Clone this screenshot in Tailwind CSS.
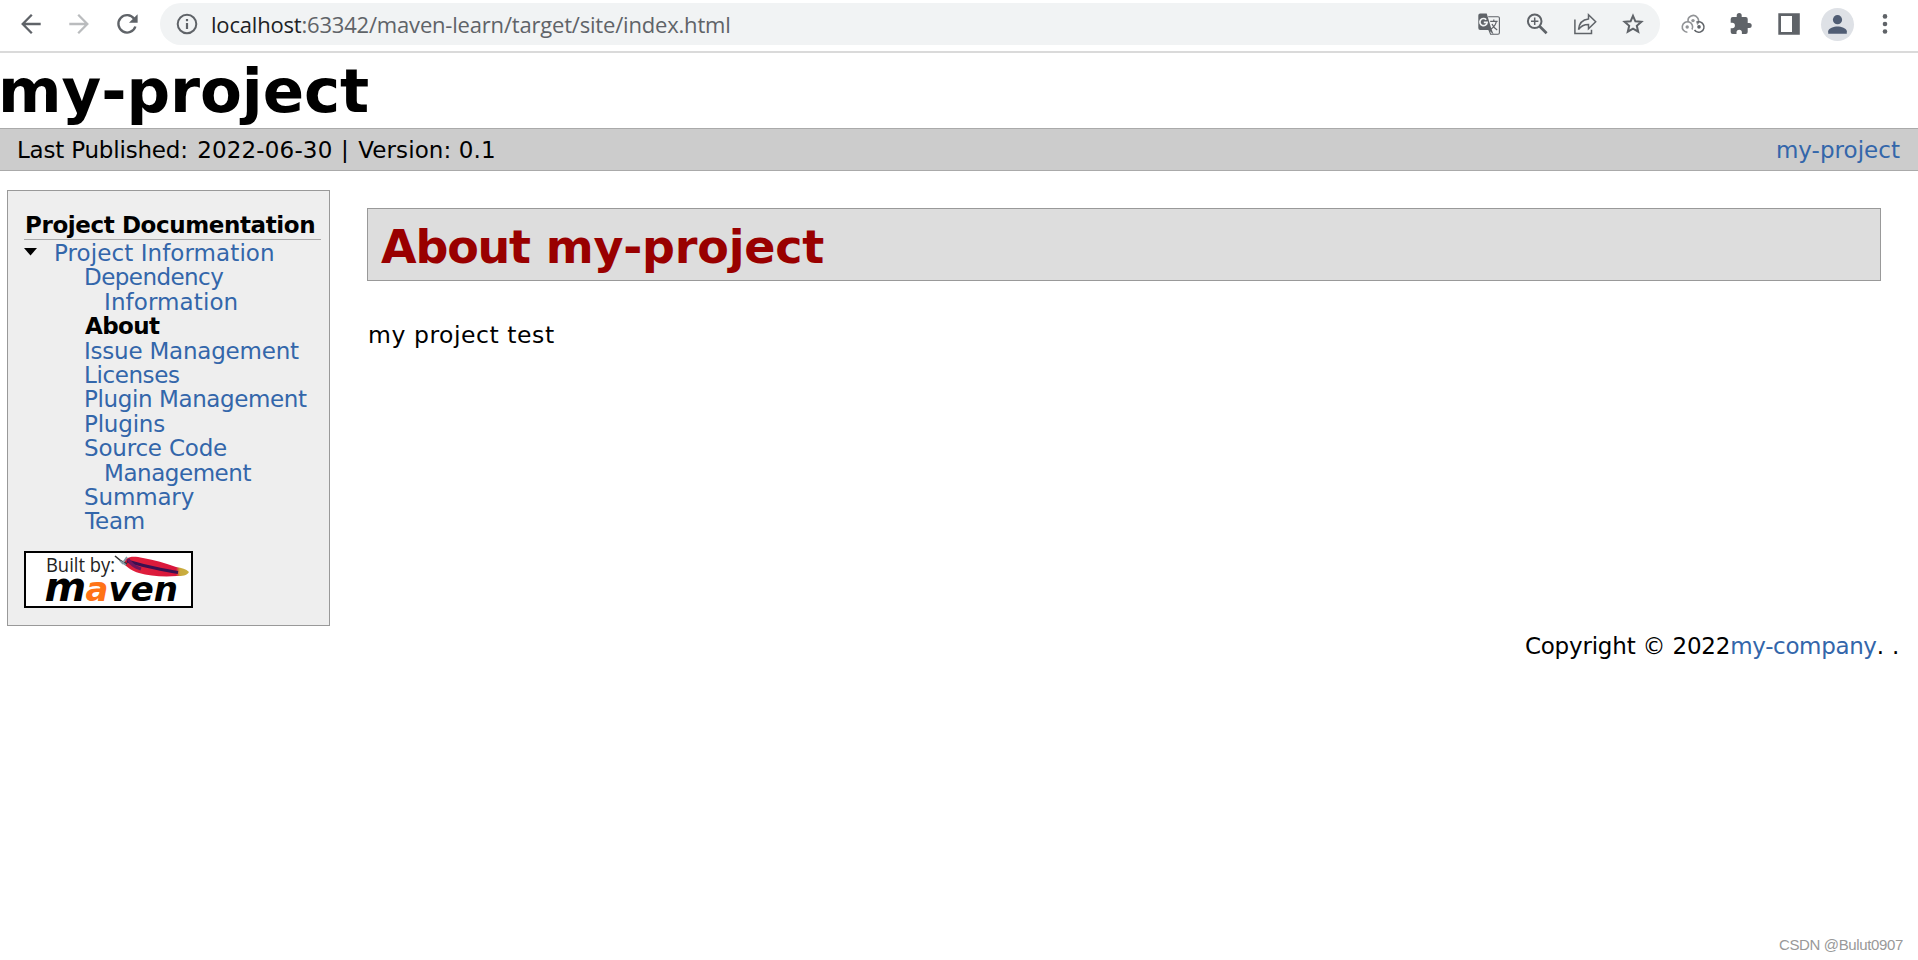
<!DOCTYPE html>
<html lang="en">
<head>
<meta charset="utf-8">
<title>my-project – About</title>
<script src="https://cdn.jsdelivr.net/npm/@tailwindcss/browser@4"></script>
</head>
<body class="relative h-[960px] overflow-hidden bg-white text-[23px] text-black font-['DejaVu_Sans',Verdana,sans-serif]">

<!-- Browser toolbar -->
<div class="flex h-[53px] items-start border-b-2 border-[#dadada] pl-[7px] text-[#5f6368]">
  <div class="flex h-12 w-[153px]">
    <svg class="h-12 w-12" viewBox="-24 -24 48 48" fill="none" stroke="currentColor" stroke-width="2.3"><path d="M9.7 0H-8M.8-9.2-8.3 0 .8 9.2"/></svg>
    <svg class="h-12 w-12 text-[#babcbe]" viewBox="-24 -24 48 48" fill="none" stroke="currentColor" stroke-width="2.3"><path d="M-9.7 0H8M-.8-9.2 8.3 0-.8 9.2"/></svg>
    <svg class="h-12 w-12" viewBox="-24 -24 48 48" fill="none" stroke="currentColor" stroke-width="2.4"><path d="M7.2-5.2A8.7 8.7 0 1 0 8.4 2.5"/><path d="M10.6-9.8v8.6H2z" fill="currentColor" stroke="none"/></svg>
  </div>
  <div class="mt-[3px] flex h-[42px] w-[1500px] items-center rounded-full bg-[#f1f3f4] pr-[3px]">
    <svg class="ml-[15px] h-6 w-6" viewBox="-12 -12 24 24" fill="none" stroke="currentColor" stroke-width="2"><circle r="9.3"/><path d="M0-1v6" stroke-width="2.2"/><path d="M0-5v2.2" stroke-width="2.2"/></svg>
    <div class="ml-3 flex-1 pb-px whitespace-nowrap font-['Open_Sans',sans-serif] text-[22px] leading-[40px] tracking-[-0.19px]"><span class="text-[#202124]">localhost</span>:63342/maven-learn/target/site/index.html</div>
    <!-- translate -->
    <svg class="h-12 w-12" viewBox="-24 -24 48 48"><path d="M-8.8-10.5h6.5l4.5 14.8 2.4 6.3-5-4.6h-8.4a1.9 1.9 0 0 1-1.9-1.9V-8.6a1.9 1.9 0 0 1 1.9-1.9z" fill="#5f6368"/><path d="M-.8-7.3H9a1.4 1.4 0 0 1 1.4 1.4V8.8A1.4 1.4 0 0 1 9 10.2H1.6L-.2 5.6" fill="none" stroke="#5f6368" stroke-width="1.1"/><path d="M1.2-2.6h7.4M4.8-4.4v1.8M7.4-2.6C6.6.8 4.4 3.6 1.8 5.2M3 0c1 2.4 2.8 4.4 5.2 6" fill="none" stroke="#5f6368" stroke-width="1.2"/><path d="M-2.8-4.3a3.6 3.6 0 1 0 .9 2.7h-3.3" fill="none" stroke="#f1f3f4" stroke-width="1.7"/></svg>
    <!-- zoom -->
    <svg class="h-12 w-12" viewBox="-24 -24 48 48" fill="none" stroke="#5f6368"><circle cx="-2.3" cy="-2.7" r="6.8" stroke-width="2"/><path d="m2.6 2.3 7 7" stroke-width="2.8"/><path d="M-6-2.7h7.4M-2.3-6.4V1" stroke-width="1.5"/></svg>
    <!-- share -->
    <svg class="h-12 w-12" viewBox="-24.5 -24 48 48" fill="none" stroke="#5f6368" stroke-width="1.5"><path d="M-10.6-4.6V9.4H6V5.8"/><path d="M3-9.3v4.2C-3.5-4.5-6.5 0-7 5.6-4.5 1.8-1.5.5 3 .5v4.3l7.2-7.1z"/></svg>
    <!-- bookmark -->
    <svg class="h-12 w-12" viewBox="-24 -24 48 48" fill="none" stroke="#5f6368" stroke-width="2"><path d="m0-8.2 2.4 5.5 6 .5-4.6 4 1.4 5.9L0 4.6l-5.2 3.1 1.4-5.9-4.6-4 6-.5z"/></svg>
  </div>
  <div class="ml-[9px] flex h-12">
    <!-- extension -->
    <svg class="h-12 w-12" viewBox="-24 -24 48 48" fill="none" stroke-width="1.6"><g stroke="#919396"><path d="M-5.6 8.2A5.2 5.2 0 1 1-1 5.5"/><path d="M-4.7-1.8A5.2 5.2 0 1 1 4 .4"/></g><path d="M1.5 6A5.2 5.2 0 1 0 3.4-1.7" stroke="#5f6368"/><circle cx="-5.8" cy="3" r="1.7" fill="#919396"/><circle cx="0" cy="-3.4" r="1.7" fill="#919396"/><circle cx="6" cy="2.9" r="1.8" fill="#5f6368"/></svg>
    <!-- puzzle -->
    <svg class="h-12 w-12" viewBox="-24 -24 48 48" fill="#5f6368"><path d="M8.2-1H6.7v-4a2 2 0 0 0-2-2H.7v-1.5a2.5 2.5 0 0 0-5 0V-7h-4a2 2 0 0 0-2 2v3.8h1.5a2.7 2.7 0 0 1 0 5.4h-1.5V8a2 2 0 0 0 2 2h3.8V8.5a2.7 2.7 0 0 1 5.4 0V10h3.8a2 2 0 0 0 2-2V4h1.5a2.5 2.5 0 0 0 0-5z"/></svg>
    <!-- side panel -->
    <svg class="h-12 w-12" viewBox="-24 -24 48 48"><path fill="#5f6368" fill-rule="evenodd" d="M-10.7-10.7h21.5v21.5h-21.5zm2.7 2.7v16H3v-16z"/></svg>
    <!-- profile -->
    <svg class="h-12 w-12" viewBox="-24.5 -24 48 48"><circle cy=".5" r="16.5" fill="#dee1e6"/><g fill="#505d74"><circle cy="-4.3" r="4.6"/><path d="M-9.3 9.7V7.2C-9.3 4-3.5 2.4 0 2.4S9.3 4 9.3 7.2v2.5z"/></g></svg>
    <!-- menu -->
    <svg class="h-12 w-12" viewBox="-24 -24 48 48" fill="#5f6368"><circle cy="-7.6" r="2.3"/><circle r="2.3"/><circle cy="7.5" r="2.3"/></svg>
  </div>
</div>

<!-- Banner -->
<h1 class="-ml-[2px] h-[75px] whitespace-nowrap text-[61px] leading-[76px] font-bold tracking-[-0.082px]">my-project</h1>

<!-- Breadcrumbs -->
<div class="flex h-[43px] justify-between border-y border-[#aaa] bg-[#ccc] pr-[18px] pl-[17px] leading-[42px] whitespace-nowrap">
  <span><span class="tracking-[-0.2px]">Last Published:</span><span class="ml-[2px] tracking-[0.159px]"> 2022-06-30 <span class="ml-px">|</span></span><span class="ml-[2px] tracking-[0.1px]"> Version: 0.1</span></span>
  <a class="tracking-[0.031px] text-[#36a]">my-project</a>
</div>

<main class="mt-[19px] flex items-start whitespace-nowrap">
  <nav class="ml-[7px] h-[436px] w-[323px] border border-[#999] bg-[#eee] pt-[22px] pr-2 pl-4">
    <h5 class="h-[27px] border-b border-[#aaa] pl-px text-[23px] leading-6 font-bold tracking-[-0.4px]">Project Documentation</h5>
    <div class="flex pt-px leading-[24.4px] text-[#36a]">
      <svg class="mt-[7px] h-2 w-[13px]" viewBox="0 0 13 8"><path d="M0 0h13L6.5 7.5z" fill="#000"/></svg>
      <a class="ml-[17px] tracking-[0.08px]">Project Information</a>
    </div>
    <ul class="pl-[60px] leading-[24.4px] text-[#36a]">
      <li class="tracking-[-0.55px]">Dependency</li>
      <li class="pl-5 tracking-[0.1px]">Information</li>
      <li class="pl-px font-bold tracking-[-0.6px] text-black">About</li>
      <li class="tracking-[-0.219px]">Issue Management</li>
      <li class="tracking-[-0.4px]">Licenses</li>
      <li class="tracking-[-0.388px]">Plugin Management</li>
      <li class="tracking-[-0.2px]">Plugins</li>
      <li class="tracking-[-0.2px]">Source Code</li>
      <li class="pl-5 tracking-[-0.45px]">Management</li>
      <li class="tracking-[-0.15px]">Summary</li>
      <li class="pl-px tracking-[-0.2px]">Team</li>
    </ul>
    <svg class="mt-[17.2px] h-[57px] w-[169px]" viewBox="0 0 169 57">
      <defs><linearGradient id="feather" x1="0" x2="1"><stop offset="0" stop-color="#d01830"/><stop offset=".15" stop-color="#e0203c"/><stop offset=".8" stop-color="#d8143c"/><stop offset=".86" stop-color="#c9a83c"/><stop offset="1" stop-color="#c8b040"/></linearGradient></defs>
      <rect x="1" y="1" width="167" height="55" fill="#fff" stroke="#000" stroke-width="2"/>
      <text x="22" y="20.5" font-family="Open Sans, sans-serif" font-size="19.5" fill="#222" textLength="69" lengthAdjust="spacingAndGlyphs">Built by:</text>
      <path d="M100 13C101 6 107 4.500 119 7c12 2 22 5 33 9 6 1 10 2 13 5-2 4-7 4-12 4-14 1-28 0-38-3-7-2-11-5-15-9z" fill="url(#feather)"/>
      <path d="M103 10c10 3 20 5.5 30 7.5s14 3 21 4" fill="none" stroke="#3a1050" stroke-width="3"/>
      <path d="M104 8c3 6 7 8 13 10" fill="none" stroke="#70155c" stroke-width="3"/>
      <path d="M91 5c3 3 7 6 12 8" fill="none" stroke="#333" stroke-width="1.5"/>
      <path d="M98 13l5-7M96 10l6 4" stroke="#8499a3" stroke-width="1.8"/>
      <text y="49.5" font-family="DejaVu Sans, sans-serif" font-weight="bold" font-style="italic" font-size="34"><tspan x="20.5" font-size="40">m</tspan><tspan x="61.5" fill="#ff7316">a</tspan><tspan x="84.5">ven</tspan></text>
    </svg>
  </nav>

  <section class="ml-[37px] w-[1514px] pt-[18px]">
    <h2 class="h-[73px] border border-[#999] bg-[#ddd] pl-[13px] text-[46px] leading-[77px] font-bold tracking-[-0.2px] text-[#900]"><span class="tracking-[-1.2px]">About</span> my-project</h2>
    <p class="mt-[42px] pl-px text-[23.5px] leading-[24px] tracking-[0.55px]">my project test</p>
  </section>
</main>

<footer class="pt-2 pr-[19px] text-right leading-[24px] tracking-[-0.2px]">Copyright © 2022<a class="tracking-[-0.35px] text-[#36a]">my-company</a>.<span class="ml-px"> .</span></footer>

<div class="absolute right-[15px] bottom-[5px] font-['Liberation_Sans',sans-serif] text-[15px] leading-5 tracking-[-0.365px] text-[#999]">CSDN @Bulut0907</div>
</body>
</html>
